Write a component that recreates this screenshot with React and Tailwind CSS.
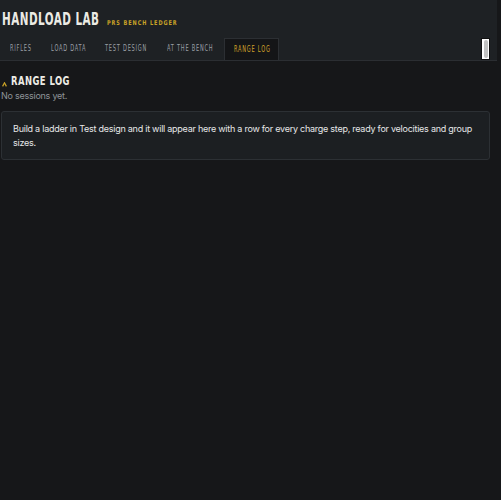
import React from "react";

const cond = { fontFamily: "'DejaVu Sans Condensed', 'DejaVu Sans', sans-serif" };

// the reference face is narrower than anything installed, so squeeze it
function Squeeze({ box, scale, children }) {
    return (
        <span className={"inline-block whitespace-nowrap " + box}>
            <span className={"inline-block origin-left " + scale}>{children}</span>
        </span>
    );
}

const tabs = [
    { label: "Rifles", box: "w-[22px]" },
    { label: "Load data", box: "w-[35px]" },
    { label: "Test design", box: "w-[43px]" },
    { label: "At the bench", box: "w-[47px]" },
    { label: "Range log", box: "w-[36px]" },
];

export default function App() {
    const active = "Range log";

    return (
        <div className="min-h-[500px] bg-[#161719] text-[#e4e6e8]" style={{ fontFamily: "Inter, 'Liberation Sans', sans-serif" }}>
            <div className="w-[497px] bg-[#1e2124] border-b border-[#2b2e32]">
                <div className="flex items-baseline gap-[8px] pl-[2px] pt-[11px] h-[38px]">
                    <h1 className="text-[17px] leading-none font-bold tracking-[0.7px] text-[#ecebe4]" style={cond}>
                        <Squeeze box="w-[97px]" scale="scale-x-[0.68]">HANDLOAD LAB</Squeeze>
                    </h1>
                    <span className="text-[6.5px] leading-none font-bold tracking-[1.1px] text-[#c9a227]" style={cond}>
                        <Squeeze box="w-[70px]" scale="scale-x-[0.85]">PRS BENCH LEDGER</Squeeze>
                    </span>
                </div>
                <div className="flex items-end gap-[1px] pl-[1px] h-[22px]">
                    {tabs.map((t) => (
                        <div
                            key={t.label}
                            className={
                                t.label === active
                                    ? "h-[22px] pl-[9px] pr-[8px] flex items-center bg-[#141517] border border-b-0 border-[#2c2f33] text-[#d2a32a]"
                                    : "h-[22px] px-[9px] flex items-center text-[#9a9fa5]"
                            }
                        >
                            <span className="text-[8px] leading-none uppercase tracking-[1.1px]" style={cond}>
                                <Squeeze box={t.box} scale="scale-x-[0.7]">{t.label}</Squeeze>
                            </span>
                        </div>
                    ))}
                    <div className="ml-auto mr-[7px] w-[9px] h-[22px] bg-white border border-[#111] flex items-center justify-center">
                        <div className="w-[4px] h-[18px] rounded-[2px] bg-[#c1c1c1]" />
                    </div>
                </div>
            </div>

            <div className="px-[1px] pt-[14px]">
                <div className="flex items-end gap-[4px] pl-[1px]">
                    <svg width="5" height="5" viewBox="0 0 5 5" className="mb-[1px]">
                        <polyline points="0.6,4.4 2.5,0.8 4.4,4.4" fill="none" stroke="#c9a227" strokeWidth="1.2" />
                    </svg>
                    <h2 className="text-[12.5px] leading-none font-bold tracking-[0.6px] text-[#ecebe4]" style={cond}>
                        <Squeeze box="w-[58px]" scale="scale-x-[0.75]">RANGE LOG</Squeeze>
                    </h2>
                </div>
                <p className="mt-[1px] text-[9px] leading-[14px] tracking-[-0.25px] text-[#8e9398]">No sessions yet.</p>

                <div className="mt-[8px] w-[489px] rounded-[3px] border border-[#2c3034] bg-[#1c1f22] pl-[11px] pr-[10px] pt-[10px] pb-[9px]">
                    <p className="text-[9px] leading-[14px] tracking-[-0.25px] text-[#e6e7e8]">
                        Build a ladder in Test design and it will appear here with a row for every charge step, ready for velocities and group sizes.
                    </p>
                </div>
            </div>
        </div>
    );
}
